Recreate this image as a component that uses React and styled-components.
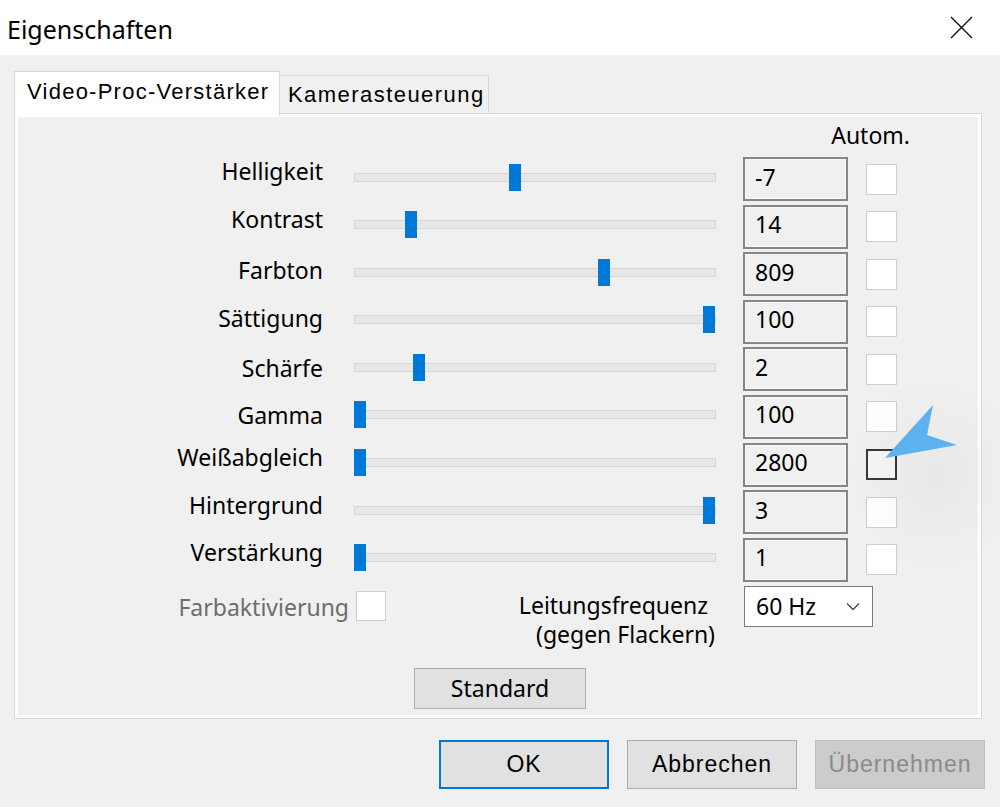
import React from "react";
import styled, { createGlobalStyle } from "styled-components";

const GlobalStyle = createGlobalStyle`
  html, body { margin: 0; padding: 0; }
  body {
    background: #f0f0f0;
    width: 1000px;
    height: 807px;
    overflow: hidden;
    font-family: "Noto Sans", "Open Sans", sans-serif;
    color: #000;
  }
  * { box-sizing: border-box; }
`;

const Window = styled.div`
  position: relative;
  width: 1000px;
  height: 807px;
  display: flex;
  flex-direction: column;
  background: #f0f0f0;
`;

const TitleBar = styled.div`
  height: 55px;
  flex: none;
  background: #fff;
  display: flex;
  align-items: center;
  justify-content: space-between;
  padding: 2px 27px 0 7px;
  font-family: "Noto Sans", sans-serif;
  font-size: 25px;
`;

const CloseButton = styled.div`
  width: 23px;
  height: 23px;
  display: flex;
  margin-top: -2px;
`;

const Content = styled.div`
  padding: 16px 0 0 14px;
  display: flex;
  flex-direction: column;
`;

const TabStrip = styled.div`
  display: flex;
  align-items: flex-end;
  height: 42px;
  margin-right: 18px;
  position: relative;
  z-index: 1;
`;

const Tab = styled.div`
  display: flex;
  align-items: center;
  font-family: "Liberation Sans", Arial, sans-serif;
  font-size: 22px;
  letter-spacing: 1.25px;
  border: 1px solid #d9d9d9;
  border-bottom: none;
  ${(p) =>
    p.$active
      ? `
    width: 266px;
    height: 45px;
    margin-bottom: -3px;
    background: #fff;
    padding: 0 0 4px 12px;
  `
      : `
    width: 209px;
    height: 38px;
    background: #f0f0f0;
    border-left: none;
    padding: 0 0 0 8px;
    letter-spacing: 1.45px;
  `}
`;

const Panel = styled.div`
  height: 606px;
  margin-right: 18px;
  border: 1px solid #d9d9d9;
  box-shadow: inset 0 0 0 3px #fff;
  display: flex;
  flex-direction: column;
`;

const HeaderRow = styled.div`
  height: 43px;
  display: flex;
  align-items: center;
  justify-content: flex-end;
  padding: 0 71px 2px 0;
  font-size: 23px;
`;

const Rows = styled.div`
  display: flex;
  flex-direction: column;
  gap: 3.6px;
`;

const Row = styled.div`
  height: 44px;
  display: flex;
  align-items: center;
`;

const Label = styled.div`
  width: 308px;
  text-align: right;
  font-size: 23px;
  line-height: 30px;
  padding-bottom: ${(p) => p.$lift}px;
`;

const Track = styled.div`
  position: relative;
  margin-left: 31px;
  margin-bottom: 4px;
  width: 362px;
  height: 9px;
  background: #e7e7e7;
  border: 1px solid #d6d6d6;
`;

const Thumb = styled.div`
  position: absolute;
  top: -10px;
  width: 12px;
  height: 27px;
  background: #0078d7;
`;

const ValueBox = styled.div`
  margin-left: 27px;
  width: 105px;
  height: 44px;
  border: 2px solid #868686;
  box-shadow: inset 0 0 0 1px #f8f8f8;
  background: #f0f0f0;
  display: flex;
  align-items: center;
  padding: 0 0 5px 10px;
  font-size: 23px;
`;

const CheckBox = styled.div`
  flex: none;
  margin-left: ${(p) => p.$ml || 18}px;
  width: ${(p) => p.$size || 31}px;
  height: ${(p) => p.$size || 31}px;
  background: ${(p) => (p.$hover ? "#f6f6f6" : "#fff")};
  border: ${(p) => (p.$hover ? "2px solid #383838" : "1.5px solid #cfcfcf")};
`;

const BottomRow = styled.div`
  margin-top: 4px;
  height: 64px;
  display: flex;
  align-items: flex-start;
`;

const FarbGroup = styled.div`
  height: 41px;
  display: flex;
  align-items: center;
`;

const FarbLabel = styled.div`
  width: 334px;
  text-align: right;
  font-size: 23px;
  color: #6d6d6d;
  padding-top: 2px;
`;

const FreqLabel = styled.div`
  margin-left: 128px;
  margin-top: 5px;
  width: 201px;
  text-align: right;
  font-size: 23px;
  line-height: 29px;
`;

const FreqLine = styled.div`
  padding-right: ${(p) => p.$pr || 0}px;
`;

const Dropdown = styled.div`
  margin-left: 29px;
  width: 129px;
  height: 41px;
  background: #fff;
  border: 1.5px solid #7a7a7a;
  display: flex;
  align-items: center;
  justify-content: space-between;
  padding: 0 12px 0 11px;
  font-size: 23px;
`;

const StandardRow = styled.div`
  margin-top: 18px;
  display: flex;
  justify-content: center;
  padding-left: 4px;
`;

const PushButton = styled.div`
  display: flex;
  align-items: center;
  justify-content: center;
  background: #e1e1e1;
  border: 1.5px solid #adadad;
`;

const StandardButton = styled(PushButton)`
  width: 172px;
  height: 41px;
  font-size: 23px;
`;

const Footer = styled.div`
  display: flex;
  justify-content: flex-end;
  gap: 18px;
  padding: 21px 15px 0 0;
`;

const DialogButton = styled(PushButton)`
  width: 170px;
  height: 49px;
  font-family: "Liberation Sans", Arial, sans-serif;
  font-size: 23px;
  letter-spacing: 1px;
  ${(p) => p.$default && `border: 2px solid #0078d7;`}
  ${(p) =>
    p.$disabled &&
    `background: #cccccc; border-color: #bfbfbf; color: #8a8a8a;`}
`;

const Halo = styled.div`
  position: absolute;
  left: 820px;
  top: 360px;
  width: 180px;
  height: 230px;
  pointer-events: none;
  background: radial-gradient(
    ellipse 90px 100px at 115px 115px,
    rgba(0, 0, 0, 0.03),
    rgba(0, 0, 0, 0) 100%
  );
`;

const Cursor = styled.svg`
  position: absolute;
  left: 880px;
  top: 400px;
  pointer-events: none;
`;

const sliders = [
  { label: "Helligkeit", value: "-7", pos: 0.443, lift: 16 },
  { label: "Kontrast", value: "14", pos: 0.147, lift: 15 },
  { label: "Farbton", value: "809", pos: 0.7, lift: 8 },
  { label: "Sättigung", value: "100", pos: 1, lift: 8 },
  { label: "Schärfe", value: "2", pos: 0.17, lift: 2 },
  { label: "Gamma", value: "100", pos: 0, lift: 4 },
  { label: "Weißabgleich", value: "2800", pos: 0, lift: 16, hover: true },
  { label: "Hintergrund", value: "3", pos: 1, lift: 14 },
  { label: "Verstärkung", value: "1", pos: 0, lift: 16 },
];

export default function App() {
  return (
    <>
      <GlobalStyle />
      <Window>
        <TitleBar>
          <span>Eigenschaften</span>
          <CloseButton>
            <svg width="23" height="23" viewBox="0 0 23 23">
              <path d="M1 1 L22 22 M22 1 L1 22" stroke="#111" strokeWidth="1.4" fill="none" />
            </svg>
          </CloseButton>
        </TitleBar>
        <Content>
          <TabStrip>
            <Tab $active>Video-Proc-Verstärker</Tab>
            <Tab>Kamerasteuerung</Tab>
          </TabStrip>
          <Panel>
            <HeaderRow>Autom.</HeaderRow>
            <Rows>
              {sliders.map((s) => (
                <Row key={s.label}>
                  <Label $lift={s.lift}>{s.label}</Label>
                  <Track>
                    <Thumb style={{ left: `${-1 + s.pos * 349}px` }} />
                  </Track>
                  <ValueBox>{s.value}</ValueBox>
                  <CheckBox $hover={s.hover} />
                </Row>
              ))}
            </Rows>
            <BottomRow>
              <FarbGroup>
                <FarbLabel>Farbaktivierung</FarbLabel>
                <CheckBox $ml={7} $size={30} />
              </FarbGroup>
              <FreqLabel>
                <FreqLine $pr={7}>Leitungsfrequenz</FreqLine>
                <FreqLine>(gegen Flackern)</FreqLine>
              </FreqLabel>
              <Dropdown>
                <span>60 Hz</span>
                <svg width="14" height="9" viewBox="0 0 14 9">
                  <path d="M1 1.5 L7 7.5 L13 1.5" stroke="#444" strokeWidth="1.3" fill="none" />
                </svg>
              </Dropdown>
            </BottomRow>
            <StandardRow>
              <StandardButton>Standard</StandardButton>
            </StandardRow>
          </Panel>
          <Footer>
            <DialogButton $default>OK</DialogButton>
            <DialogButton>Abbrechen</DialogButton>
            <DialogButton $disabled>Übernehmen</DialogButton>
          </Footer>
        </Content>
        <Halo />
        <Cursor width="80" height="62" viewBox="0 0 80 62">
          <polygon points="5,58 53,5 47,35 77,45" fill="#5cb1ee" />
        </Cursor>
      </Window>
    </>
  );
}
